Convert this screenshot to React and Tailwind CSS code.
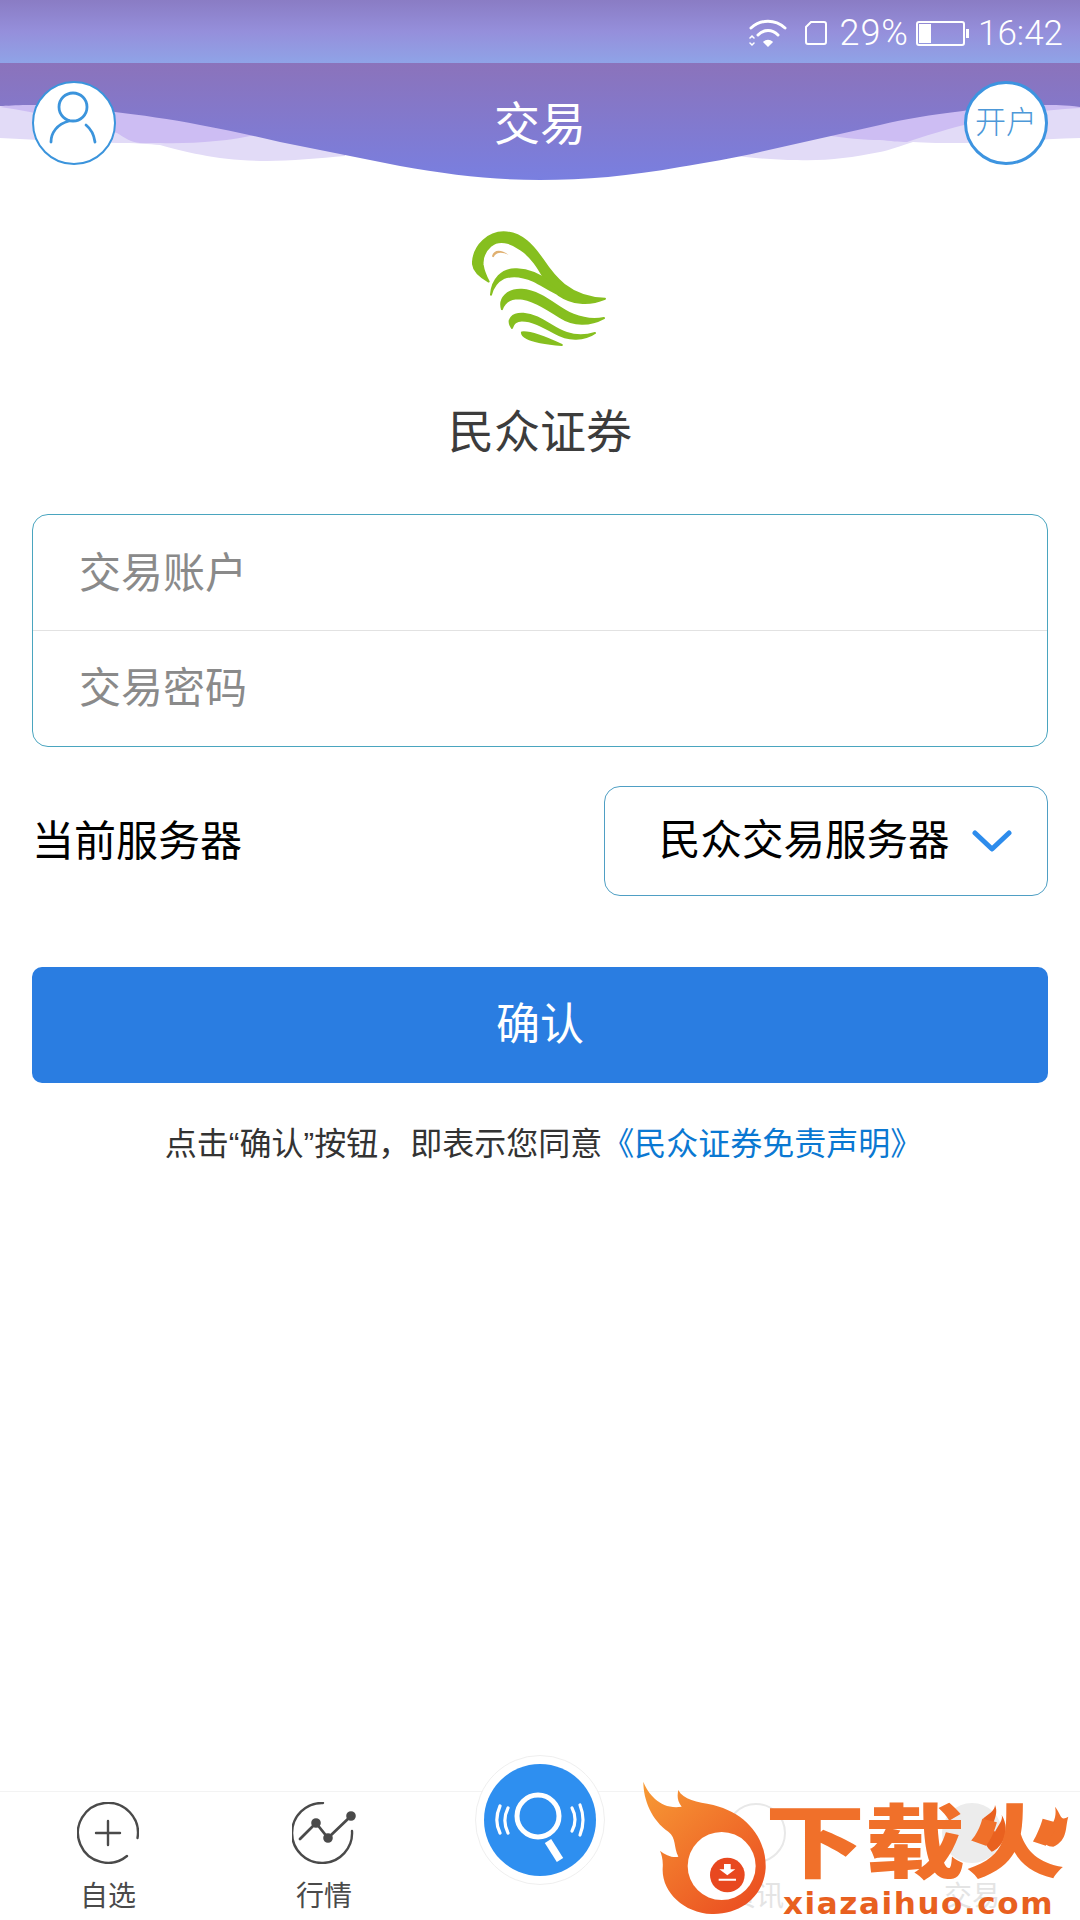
import React from 'react';

const FONT = "[font-family:'Liberation_Sans','Noto_Sans_CJK_SC',sans-serif]";

const StatusBar = () => (
  <div className="flex h-[63px] items-center justify-end bg-gradient-to-b from-[#8a7cc4] via-[#958fdb] to-[#8fa3e7] pr-[17px] pt-[3px] text-white [font-family:Roboto,sans-serif]">
    <svg width="38" height="30" viewBox="0 0 38 30" fill="none" stroke="white" strokeWidth="3" strokeLinecap="round" className="mr-[18px]">
      <path d="M2 10 C12 1 26 1 36 10" />
      <path d="M9 17 C15 11 23 11 29 17" />
      <path d="M15 24 L19 28 L23 24 C21 22 17 22 15 24Z" fill="white" strokeWidth="1.5" />
      <path d="M1 20 L3 18 L5 20 M1 25 L3 27 L5 25" strokeWidth="1.5" />
    </svg>
    <svg width="22" height="24" viewBox="0 0 22 24" fill="none" stroke="white" strokeWidth="2" className="mr-[12px]">
      <path d="M6 1 H19 A2 2 0 0 1 21 3 V21 A2 2 0 0 1 19 23 H3 A2 2 0 0 1 1 21 V6Z" />
    </svg>
    <span className="mr-[7px] text-[36px] font-light leading-none tracking-[1px]">29%</span>
    <svg width="53" height="25" viewBox="0 0 53 25" fill="none" className="mr-[9px]">
      <rect x="1" y="1" width="47" height="23" rx="2" stroke="white" strokeWidth="2" />
      <rect x="3" y="3" width="12" height="19" fill="white" />
      <rect x="50" y="8" width="3" height="9" fill="white" />
    </svg>
    <span className="text-[35px] font-light leading-none">16:42</span>
  </div>
);

const Header = () => (
  <div className="relative h-[122px]">
    <svg className="absolute inset-0" width="1080" height="122" viewBox="0 63 1080 122" fill="none">
      <defs>
        <linearGradient id="hdr" x1="0" y1="63" x2="0" y2="180" gradientUnits="userSpaceOnUse">
          <stop offset="0" stopColor="#8b73bb" />
          <stop offset="1" stopColor="#797fe0" />
        </linearGradient>
      </defs>
      {/* pale layer */}
      <path d="M0 106 L0 138 C40 140 80 142 117 143 C135 143 150 144 160 145 C185 152 220 161 267 161 C290 161 320 158 345 156 L345 120 L100 100Z" fill="#e2dbf7" />
      <path d="M1080 106 L1080 138 C1040 139 1000 143 963 143 C945 143 925 143 913 142 C900 146 890 150 880 152 C850 158 825 161 797 160 C775 160 755 158 737 156 L737 120 L1000 100Z" fill="#e2dbf7" />
      {/* mid layer */}
      <path d="M0 107 C40 112 80 125 117 133 C125 138 130 142 140 143 L160 143 C190 144 230 141 255 135 L255 110 L30 100Z" fill="#cdbdf3" />
      <path d="M823 135 C845 138 865 140 880 140 C890 141 900 142 907 142 C925 136 945 130 960 126 C990 118 1040 110 1080 108 L1080 95 L823 95Z" fill="#cdbdf3" />
      <path d="M0 63 H1080 V107 C1065 105 1055 105 1043 105 C1015 105 985 107 963 111 C930 115 905 119 880 125 C840 134 800 143 760 152 C735 158 705 163 680 167 C630 176 585 180 540 180 C495 180 450 175 400 166 C360 158 320 150 280 142 C255 136 228 130 200 125 C170 119 140 115 115 112 C85 107 55 105 27 105 C15 105 8 106 0 106Z" fill="url(#hdr)" />
    </svg>
    <div className="relative flex h-full items-start justify-between px-[32px] pt-[18px]">
      <div className="flex h-[84px] w-[84px] items-center justify-center rounded-full border-2 border-[#3b94dc] bg-white">
        <svg width="80" height="80" viewBox="2 2 80 80" fill="none" stroke="#3b94dc" strokeWidth="2.8" strokeLinecap="round">
          <circle cx="41" cy="26" r="14" />
          <path d="M37 40 C25 43 19 52 19 61" />
          <path d="M54 44 C59 48 62 54 63 61" />
        </svg>
      </div>
      <span className="mt-[16px] text-[46px] leading-[54px] text-white">交易</span>
      <div className="flex h-[84px] w-[84px] items-center justify-center rounded-full border-[3px] border-[#3d94e0] bg-white text-[31px] font-light text-[#4d98d8]">开户</div>
    </div>
  </div>
);

const Logo = () => (
  <svg width="137" height="118" viewBox="156 90 410 355" className="mx-auto mt-[45px]" fill="#86bf1f" stroke="#86bf1f" strokeWidth="6" strokeLinejoin="round">
    <path d="M205 245 C175 228 155 210 158 185 C162 135 205 97 250 97 C305 97 340 140 368 180 C400 228 445 292 555 297 C505 318 455 312 415 285 L375 240 C355 205 335 170 300 148 C270 125 235 118 212 137 C195 152 185 175 187 195 C190 215 197 230 205 245Z" />
    <path d="M212 285 C215 240 245 205 290 208 C330 210 360 225 385 245 L430 290 C400 280 370 258 340 243 C310 230 275 225 250 235 C230 245 218 262 212 285Z" />
    <path d="M245 328 C235 295 262 268 305 270 C370 275 410 325 460 345 C490 357 525 360 552 355 C510 378 460 378 420 352 C370 320 330 296 295 295 C270 295 252 308 245 328Z" />
    <path d="M275 385 C258 360 275 340 310 342 C360 345 395 385 440 400 C470 410 500 408 525 400 C490 425 440 420 405 400 C365 378 335 362 305 362 C288 362 278 372 275 385Z" />
    <path d="M305 398 C330 395 370 410 425 436 C380 432 340 425 320 415 C310 410 305 405 305 398Z" />
    <path d="M215 170 C218 150 240 145 265 165 C245 155 228 155 220 172Z" fill="#e0b070" stroke="none" />
  </svg>
);

const LoginForm = () => (
  <div className="px-[32px]">
    <div className="mt-[54px] text-center text-[46px] leading-[60px] text-[#3c3c3c]">民众证券</div>
    <div className="mt-[52px] overflow-hidden rounded-[16px] border border-[#4aa5bf]">
      <div className="flex h-[116px] items-center border-b border-[#e2e2e2] pl-[46px] pt-[2px] text-[42px] text-[#8a8a8a]">交易账户</div>
      <div className="flex h-[115px] items-center pl-[46px] text-[42px] text-[#8a8a8a]">交易密码</div>
    </div>
    <div className="mt-[39px] flex items-center justify-between">
      <span className="text-[42px] text-black">当前服务器</span>
      <div className="flex h-[110px] w-[444px] items-center rounded-[16px] border border-[#4f9fc4] pl-[54px] text-[41.5px] text-black">
        <span>民众交易服务器</span>
        <svg width="40" height="22" viewBox="0 0 40 22" fill="none" stroke="#2d8cec" strokeWidth="5" strokeLinecap="round" strokeLinejoin="round" className="ml-[22px]">
          <path d="M3 3 L20 19 L37 3" />
        </svg>
      </div>
    </div>
    <div className="mt-[71px] flex h-[116px] items-center justify-center rounded-[10px] bg-[#2a7de1] text-[44px] text-white">确认</div>
    <div className="mt-[42px] whitespace-nowrap pl-[7px] text-center text-[32px] leading-[38px] text-[#333333]">
      点击“确认”按钮，即表示您同意<span className="text-[#0a78d2]">《民众证券免责声明》</span>
    </div>
  </div>
);

const Tab = ({ label, color = 'text-[#4a4a4a]', children }) => (
  <div className={`flex flex-col items-center pt-[9px] text-[28px] leading-[34px] ${color}`}>
    <div className="flex h-[64px] w-[64px] items-center justify-center">{children}</div>
    <span className="mt-[15px]">{label}</span>
  </div>
);

const TabBar = () => (
  <div className="relative mt-auto h-[129px] border-t border-[#f3f3f3]">
    <div className="grid grid-cols-5">
      <Tab label="自选">
        <svg width="62" height="62" viewBox="0 0 62 62" fill="none" stroke="#4a4a4a" strokeWidth="2.4" strokeLinecap="round">
          <path d="M50 54 A30 30 0 1 1 60.5 36" />
          <path d="M19 31 H43 M31 19 V43" />
        </svg>
      </Tab>
      <Tab label="行情">
        <svg width="64" height="62" viewBox="0 0 64 62" fill="none" stroke="#4a4a4a" strokeWidth="2.4" strokeLinecap="round">
          <path d="M31 1 A30 30 0 1 0 60 29" />
          <path d="M8 37 L24 21 L36 36 L59 14" strokeWidth="2.8" />
          <circle cx="24" cy="21" r="3.6" fill="#4a4a4a" />
          <circle cx="36" cy="36" r="3.6" fill="#4a4a4a" />
          <circle cx="59" cy="14" r="3.6" fill="#4a4a4a" />
        </svg>
      </Tab>
      <div />
      <Tab label="资讯" color="text-[#e4e4e4]">
        <div className="h-[60px] w-[60px] rounded-full border-2 border-[#e8e8e8]" />
      </Tab>
      <Tab label="交易" color="text-[#e4e4e4]">
        <div className="h-[60px] w-[60px] rounded-full bg-[#ececec]" />
      </Tab>
    </div>
    <div className="absolute left-[475px] top-[-37px] flex h-[130px] w-[130px] items-center justify-center rounded-full border border-[#efefef] bg-white">
      <svg width="112" height="112" viewBox="-1 -1 112 112" fill="none" stroke="white" strokeLinecap="round">
        <circle cx="55" cy="55" r="56" fill="#2e8ff0" stroke="none" />
        <circle cx="53" cy="51" r="21" strokeWidth="5" />
        <path d="M63 76 L75 95" strokeWidth="7.5" strokeLinecap="butt" />
        <path d="M23 43 C19 51 19 60 23 68 M15 41 C11 50 11 60 15 68" strokeWidth="3.2" />
        <path d="M87 43 C91 50 91 59 87 66 M95 40 C99 50 99 60 95 70" strokeWidth="3.2" />
      </svg>
    </div>
  </div>
);

const Watermark = () => (
  <div className="absolute left-[620px] top-[1760px] h-[160px] w-[460px]">
    <svg className="absolute inset-0" width="460" height="160" viewBox="0 0 1380 480" fill="none">
      <defs>
        <linearGradient id="flame" x1="70" y1="70" x2="420" y2="460" gradientUnits="userSpaceOnUse">
          <stop offset="0" stopColor="#f79a35" />
          <stop offset="1" stopColor="#ea4a20" />
        </linearGradient>
      </defs>
      <path d="M70 65 C85 105 125 150 185 140 C170 120 172 105 175 90 C190 120 230 125 280 135 C380 160 440 235 437 325 C432 410 360 465 275 462 C190 458 125 395 128 325 C130 300 125 285 120 272 C135 285 160 295 175 290 C160 260 170 235 145 215 C95 180 70 120 70 65Z" fill="url(#flame)" />
      <circle cx="305" cy="318" r="102" fill="white" />
      <circle cx="322" cy="345" r="52" fill="#e8481f" />
      <path d="M312 312 H332 V328 H346 L322 346 L298 328 H312Z M296 356 H348 V362 H296Z" fill="white" />
      <path d="M1090 175 C1110 160 1125 150 1125 135 C1140 170 1105 195 1125 215 C1135 195 1150 180 1145 165 C1175 215 1145 265 1115 275 C1085 250 1080 205 1090 175Z" fill="#e9611f" />
      <path d="M1290 200 C1305 185 1310 160 1305 140 C1325 165 1320 185 1345 170 C1335 200 1345 240 1300 260 C1265 260 1255 225 1290 200Z" fill="#f0702a" />
    </svg>
    <span className="absolute left-[145px] top-[28px] origin-center scale-y-[0.8] whitespace-nowrap text-[100px] font-black leading-[110px] text-[#f0702a]">下载火</span>
    <span className="absolute left-[163px] top-[125px] whitespace-nowrap text-[31px] font-bold leading-[36px] tracking-[1.6px] text-[#e8601f] [font-family:'DejaVu_Sans',sans-serif]">xiazaihuo.com</span>
  </div>
);

export default function App() {
  return (
    <div lang="zh-CN" className={`relative flex h-[1920px] w-[1080px] flex-col overflow-hidden bg-white ${FONT}`}>
      <StatusBar />
      <Header />
      <Logo />
      <LoginForm />
      <TabBar />
      <Watermark />
    </div>
  );
}
